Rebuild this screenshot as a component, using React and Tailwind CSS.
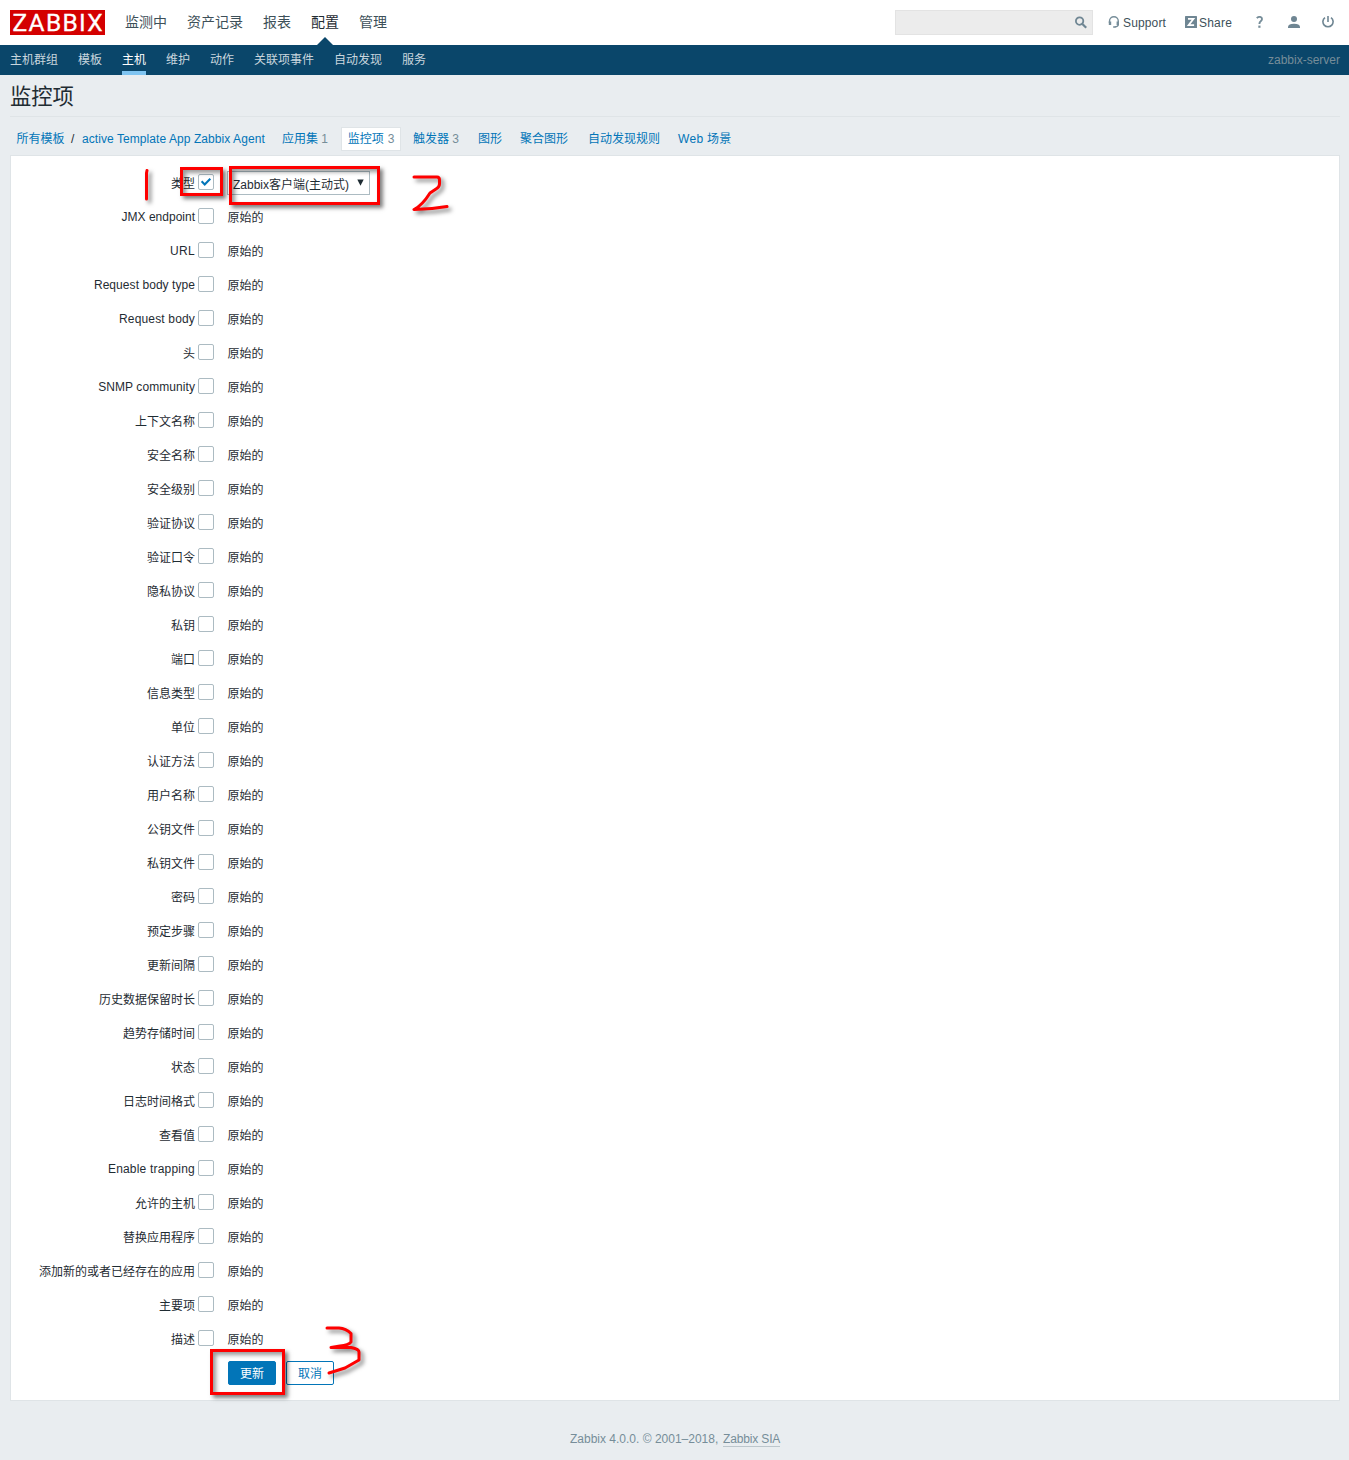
import React from 'react';

const mainMenu = [
  { label: '监测中', box: 'w-[42px] mr-5' },
  { label: '资产记录', box: 'w-14 mr-5' },
  { label: '报表', box: 'w-7 mr-5' },
  { label: '配置', box: 'w-7 mr-5', active: true },
  { label: '管理', box: 'w-7' },
];

const subMenu = [
  { label: '主机群组', box: 'w-12 mr-5' },
  { label: '模板', box: 'w-6 mr-5' },
  { label: '主机', box: 'w-6 mr-5', active: true },
  { label: '维护', box: 'w-6 mr-5' },
  { label: '动作', box: 'w-6 mr-5' },
  { label: '关联项事件', box: 'w-[60px] mr-5' },
  { label: '自动发现', box: 'w-12 mr-5' },
  { label: '服务', box: 'w-6' },
];

const fields = [
  'JMX endpoint', 'URL', 'Request body type', 'Request body', '头', 'SNMP community',
  '上下文名称', '安全名称', '安全级别', '验证协议', '验证口令', '隐私协议', '私钥', '端口',
  '信息类型', '单位', '认证方法', '用户名称', '公钥文件', '私钥文件', '密码', '预定步骤',
  '更新间隔', '历史数据保留时长', '趋势存储时间', '状态', '日志时间格式', '查看值',
  'Enable trapping', '允许的主机', '替换应用程序', '添加新的或者已经存在的应用', '主要项', '描述',
];

const labelTracking = {
  URL: 'tracking-[0.3px]',
  'Request body type': 'tracking-[0.06px]',
  'Request body': 'tracking-[0.16px]',
  'SNMP community': 'tracking-[0.07px]',
  'Enable trapping': 'tracking-[0.2px]',
};

function Logo() {
  return (
    <svg width="95" height="25" className="block shrink-0 overflow-visible">
      <rect width="95" height="25" fill="#d40000" />
      <text x="2.5" y="21.4" fontSize="24.5" fontFamily="Roboto, sans-serif" fill="#fff" stroke="#fff" strokeWidth="0.3" textLength="90" lengthAdjust="spacing">
        ZABBIX
      </text>
    </svg>
  );
}

function SearchIcon() {
  return (
    <svg width="14" height="14" viewBox="0 0 14 14" fill="none" stroke="#6f8693">
      <circle cx="5.6" cy="5.1" r="3.7" strokeWidth="1.8" />
      <path d="M8.4 8 L12.2 11.8" strokeWidth="2.2" />
    </svg>
  );
}

function HeadsetIcon() {
  return (
    <svg width="12" height="12" viewBox="0 0 12 12" fill="none" stroke="#768d99">
      <path d="M1.5 7 V5.2 A4.4 4.4 0 0 1 10.3 5.2 V8.4 Q10.3 10.4 7 10.9" strokeWidth="1.4" />
      <path d="M2 5.6 V9 M9.8 5.6 V9" strokeWidth="2.4" />
      <path d="M5.2 11 H7.6" strokeWidth="1.6" />
    </svg>
  );
}

function ShareIcon() {
  return (
    <svg width="12" height="12" viewBox="0 0 12 12">
      <rect width="12" height="12" rx="0.6" fill="#6f8693" />
      <path d="M3 2.9 H8.5 L3.6 9.1 H9.1" fill="none" stroke="#fff" strokeWidth="1.7" />
    </svg>
  );
}

function HelpIcon() {
  return (
    <svg width="8" height="12" viewBox="0 0 8 12" fill="none" stroke="#768d99">
      <path d="M0.8 2.1 Q1.9 0.9 3.6 0.9 Q6 0.9 6 3 Q6 4.2 4.7 5.2 Q3.4 6.2 3.4 8" strokeWidth="1.9" />
      <path d="M3.4 9.6 V11.8" strokeWidth="2.2" />
    </svg>
  );
}

function UserIcon() {
  return (
    <svg width="12" height="12" viewBox="0 0 12 12" fill="#6f8693">
      <circle cx="6" cy="3" r="3" />
      <path d="M0 12 V10.7 Q0.4 7.7 6 7.7 Q11.6 7.7 12 10.7 V12 Z" />
    </svg>
  );
}

function PowerIcon() {
  return (
    <svg width="12" height="12" viewBox="0 0 12 12" fill="none" stroke="#6f8693" strokeWidth="1.6">
      <path d="M6 0 V6" />
      <path d="M3 1.6 A5.1 5.1 0 1 0 9 1.6" />
    </svg>
  );
}

function Checkbox({ checked }) {
  return (
    <span className="ml-[3px] flex h-4 w-4 shrink-0 items-center justify-center rounded-[2px] border border-[#acbbc2] bg-white">
      {checked && (
        <svg width="12" height="10" viewBox="0 0 12 10" className="shrink-0">
          <path d="M1.6 4.3 L4.7 7.4 L10.3 1.8" fill="none" stroke="#0275b8" strokeWidth="2.1" />
        </svg>
      )}
    </span>
  );
}

function Row({ label, checked, children }) {
  const latin = /^[A-Z]/.test(label);
  return (
    <div className="flex h-[34px] items-center">
      <div className={`flex w-[184px] justify-end whitespace-nowrap leading-4 ${latin ? 'pt-0.5' : 'pt-[3px]'} ${labelTracking[label] || ''}`}>{label}</div>
      <Checkbox checked={checked} />
      {children || <span className="ml-[13.5px] pt-[3px] leading-4">原始的</span>}
    </div>
  );
}

function Frame({ className }) {
  return <div className={`absolute border-[3px] border-[#fe0000] shadow-[3px_3px_4px_rgba(0,0,0,0.5),inset_3px_3px_4px_rgba(0,0,0,0.4)] ${className}`} />;
}

function Mark({ className, d, w, h }) {
  return (
    <svg
      width={w}
      height={h}
      className={`absolute overflow-visible drop-shadow-[3px_3px_2px_rgba(0,0,0,0.5)] ${className}`}
      fill="none"
      stroke="#fe0000"
      strokeWidth="3"
      strokeLinecap="round"
      strokeLinejoin="round"
    >
      <path d={d} />
    </svg>
  );
}

export default function App() {
  return (
    <div className="relative h-[1460px] w-[1349px] overflow-hidden bg-[#e9edf0] font-['Liberation_Sans','Noto_Sans_CJK_SC',sans-serif] text-xs text-[#1f2c33]">
      <header className="flex h-[45px] items-center bg-white pl-2.5">
        <Logo />
        <nav className="ml-5 flex text-sm text-[#3d5059]">
          {mainMenu.map((m) => (
            <div key={m.label} className={`relative flex h-[45px] shrink-0 items-center whitespace-nowrap pb-0.5 ${m.box} ${m.active ? 'text-[#1f2c33]' : ''}`}>
              {m.label}
              {m.active && (
                <span className="absolute bottom-0 left-1.5 border-x-8 border-b-8 border-x-transparent border-b-[#0a466a]" />
              )}
            </div>
          ))}
        </nav>
        <div className="ml-auto flex h-[25px] w-[198px] items-center justify-end border border-[#e3e3e3] bg-[#ececec] pr-1">
          <SearchIcon />
        </div>
        <div className="ml-[15px] flex w-[77px] items-center gap-[3px] pb-px text-[#3d5059]">
          <HeadsetIcon />
          <span className="mt-0.5 leading-4 tracking-[0.14px]">Support</span>
        </div>
        <div className="flex w-[71px] items-center gap-[2px] pb-px text-[#3d5059]">
          <ShareIcon />
          <span className="mt-0.5 leading-4 tracking-[0.2px]">Share</span>
        </div>
        <span className="w-8 pb-px"><HelpIcon /></span>
        <span className="w-[34px] pb-px"><UserIcon /></span>
        <span className="w-[27px] pb-px"><PowerIcon /></span>
      </header>

      <div className="flex h-[30px] bg-[#0a466a] pl-2.5 pr-[9px] text-[#c9d6de]">
        {subMenu.map((m) => (
          <div key={m.label} className={`flex h-[30px] shrink-0 items-center whitespace-nowrap ${m.box} ${m.active ? 'border-b-4 border-[#7fc4f1] pt-1 text-white' : ''}`}>
            {m.label}
          </div>
        ))}
        <div className="ml-auto flex items-center text-[#768d99]">zabbix-server</div>
      </div>

      <h1 className="mx-2.5 mr-[9px] h-[42px] border-b border-[#dfe4e7] pt-1.5 text-[21.3px] leading-8">监控项</h1>

      <div className="flex h-[38px] items-center whitespace-nowrap pl-4 pt-[5px] text-[#0275b8]">
        <span className="w-[55px] pl-[0.5px]">所有模板</span>
        <span className="w-[11px] text-[#1f2c33]">/</span>
        <span className="w-[183px] tracking-[0.07px]">active Template App Zabbix Agent</span>
        <span className="ml-[17px] w-[59px]">应用集 <span className="text-[#768d99]">1</span></span>
        <span className="flex h-6 w-[60px] items-center justify-center gap-1 border border-[#dfe4e7] bg-white">监控项 <span className="text-[#768d99]">3</span></span>
        <span className="ml-3 w-[65px]">触发器 <span className="text-[#768d99]">3</span></span>
        <span className="w-[42px]">图形</span>
        <span className="w-[68px]">聚合图形</span>
        <span className="w-[90px]">自动发现规则</span>
        <span className="tracking-[0.3px]">Web 场景</span>
      </div>

      <main className="ml-2.5 mr-[9px] h-[1246px] border border-[#dfe4e7] bg-white pt-[9px]">
        <Row label="类型" checked>
          <div className="ml-[13px] mt-0.5 flex h-6 w-[143px] items-center justify-between border border-[#acbbc2] pl-[5px] pr-[5px]">
            <span className="whitespace-nowrap pt-[3px] leading-4">Zabbix客户端(主动式)</span>
            <svg width="7" height="7" className="mb-0.5 shrink-0"><path d="M0.3 0.5 H6.7 L3.5 6.8 Z" fill="#1f2c33" /></svg>
          </div>
        </Row>
        {fields.map((f) => <Row key={f} label={f} />)}
        <div className="ml-[217px] mt-1.5 flex gap-2.5">
          <button className="h-6 w-12 rounded-[2px] border border-[#0275b8] bg-[#0275b8] pt-px text-white">更新</button>
          <button className="h-6 w-12 rounded-[2px] border border-[#0275b8] bg-white pt-px text-[#0275b8]">取消</button>
        </div>
      </main>

      <footer className="ml-[570px] mt-[30px] flex gap-1 leading-4 text-[#768d99]">
        <span className="w-[149px] whitespace-nowrap">Zabbix 4.0.0. © 2001–2018,</span>
        <span className="h-4 border-b border-[#bcc6cc] tracking-[-0.15px]">Zabbix SIA</span>
      </footer>

      <Frame className="left-[180px] top-[167px] h-[29px] w-[43px]" />
      <Frame className="left-[229px] top-[166px] h-[39px] w-[151px]" />
      <Frame className="left-[210px] top-[1349px] h-[46px] w-[75px]" />
      <Mark className="left-[145px] top-[169px]" w="4" h="32" d="M2 1.5 L1.5 4 V30" />
      <Mark className="left-[412px] top-[175px]" w="37" h="37" d="M2 2 H25 Q27.5 2 27.5 5 V9 Q27.5 12 24 14 L18 18 C13 26 9 31 2 34.5 Q18 34.5 35 31.5" />
      <Mark className="left-[325px] top-[1326px]" w="38" h="49" d="M2 2 H14 Q21 2.5 26 7.5 V16 Q24 19 15 20 L6 21.5 H26 Q34 23 34 26 V34 L20 42 L4 47" />
    </div>
  );
}
